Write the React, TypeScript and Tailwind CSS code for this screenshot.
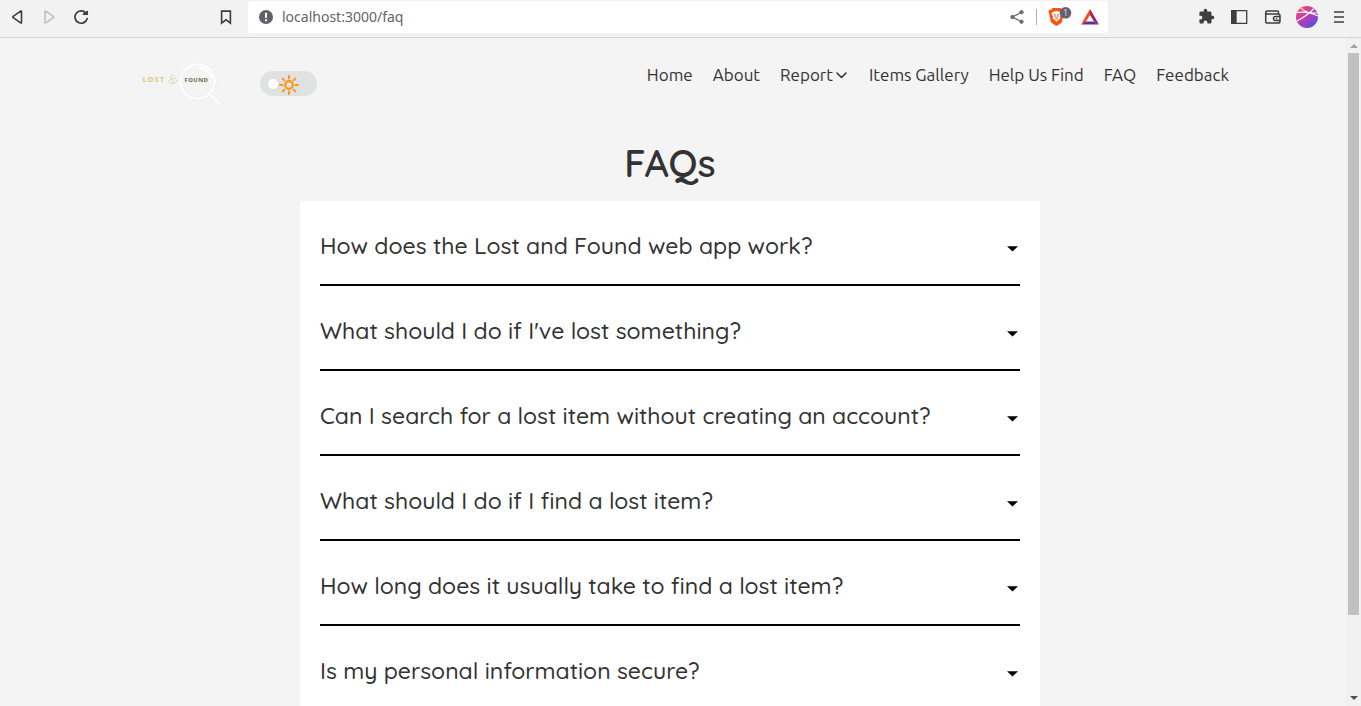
import { useState } from "react";

const questions = [
  "How does the Lost and Found web app work?",
  "What should I do if I've lost something?",
  "Can I search for a lost item without creating an account?",
  "What should I do if I find a lost item?",
  "How long does it usually take to find a lost item?",
  "Is my personal information secure?",
];

function BrowserBar() {
  return (
    <div className="flex h-[38px] shrink-0 items-center border-b border-[#d4d5d6] bg-[#f2f2f2] text-[#3b3e42]">
      <div className="flex w-[248px] items-center pb-1 pl-2">
        <button aria-label="Back" className="flex w-8">
          <svg width="18" height="18" viewBox="0 0 18 18" fill="none" stroke="currentColor" strokeWidth="1.6" strokeLinejoin="round">
            <path d="M13.500 3.600v10.800q0 1-.9.5L5.200 9.700q-.8-.7 0-1.400l7.400-5.200q.9-.5.9.5z" />
          </svg>
        </button>
        <button aria-label="Forward" disabled className="flex w-8 text-[#bfc0c2]">
          <svg width="18" height="18" viewBox="0 0 18 18" fill="none" stroke="currentColor" strokeWidth="1.6" strokeLinejoin="round">
            <path d="M5 3.600v10.800q0 1 .9.5l7.400-5.200q.8-.7 0-1.400L5.900 3.100Q5 2.600 5 3.600z" />
          </svg>
        </button>
        <button aria-label="Reload" className="flex">
          <svg width="18" height="18" viewBox="0 0 18 18" fill="none" stroke="currentColor" strokeWidth="1.7" strokeLinecap="round">
            <path d="M13.900 5A6.200 6.200 0 1 0 15.200 10.500" />
            <path d="M11.500 6.200h3.700V3.600z" fill="currentColor" strokeLinejoin="round" />
          </svg>
        </button>
        <button aria-label="Bookmark this page" className="mr-[13px] ml-auto flex">
          <svg width="18" height="18" viewBox="0 0 18 18" fill="none" stroke="currentColor" strokeWidth="1.600">
            <path d="M4.600 3.100h8.800v12.100L9 11.800l-4.400 3.400z" />
          </svg>
        </button>
      </div>
      <div className="mb-1 flex h-8 w-[860px] items-center rounded bg-white pr-2 pl-[11px]">
        <svg width="14" height="14" viewBox="0 0 14 14" className="shrink-0">
          <circle cx="7" cy="7" r="7" fill="#5f6368" />
          <path d="M6 2.700h2v5H6zM6 9.300h2v2H6z" fill="#fff" />
        </svg>
        <input
          aria-label="Address"
          defaultValue="localhost:3000/faq"
          className="ml-[9px] min-w-0 flex-1 bg-transparent font-['Noto_Sans',sans-serif] text-sm text-[#626569] outline-none"
        />
        <button aria-label="Share" className="mr-3 flex">
          <svg width="14" height="16" viewBox="0 0 14 16" fill="#6b6e72" stroke="#6b6e72">
            <path d="M12 3 2.500 8l9.500 5" fill="none" strokeWidth="1.300" />
            <circle cx="11.500" cy="3.200" r="1.700" />
            <circle cx="2.500" cy="8" r="1.700" />
            <circle cx="11.500" cy="12.700" r="1.700" />
          </svg>
        </button>
        <span className="mr-[10px] h-4 w-px bg-[#adafb2]" />
        <button aria-label="Brave Shields" className="mr-2 flex">
          <svg width="25" height="20" viewBox="0 0 25 20">
            <path d="M5.500 1h8l1.300 1.600 1.400-.1 1.300 2-.7 2-1.700 8q-.3 1-1.200 1.700L9.800 18.800h-.9l-4-2.700q-.9-.6-1.200-1.600L2.100 6.600l-.7-2 1.300-2 1.500.1z" fill="#fb5412" />
            <path d="m5.500 5 4-1 4 1 1 2-1.600 2.500.5 1.800-3.900 3.400-3.900-3.400.5-1.800L4.500 7z" fill="#fff" />
            <path d="m6.600 7 1.700.6-.4 1.900 1.600.9 1.600-.9-.4-1.900 1.700-.6M8 12.200l1.500-.7 1.500.7" fill="none" stroke="#fb5412" strokeWidth=".9" />
            <circle cx="18.500" cy="5.800" r="5.800" fill="#5f6170" />
            <text x="18.500" y="9" textAnchor="middle" fontSize="9" fill="#d8d8dc" fontFamily="Noto Sans">1</text>
          </svg>
        </button>
        <button aria-label="Brave Rewards" className="flex">
          <svg width="20" height="18" viewBox="0 0 20 18">
            <path d="M10 1 1 16.500l5-3L10 7z" fill="#ff4724" />
            <path d="m10 1 9 15.500-5-3L10 7z" fill="#9e1f63" />
            <path d="M1 16.500h18l-5-3H6z" fill="#662d91" />
          </svg>
        </button>
      </div>
      <div className="ml-auto flex items-center pr-[13px] pb-1">
        <button aria-label="Extensions" className="mr-[15px] flex">
          <svg width="17" height="17" viewBox="0 0 24 24" fill="currentColor">
            <path d="M20.500 11H19V7c0-1.100-.9-2-2-2h-4V3.500a2.500 2.500 0 0 0-5 0V5H4a2 2 0 0 0-2 2v3.800h1.500a2.700 2.700 0 0 1 0 5.400H2V20c0 1.100.9 2 2 2h3.800v-1.500a2.700 2.700 0 0 1 5.400 0V22H17a2 2 0 0 0 2-2v-4h1.500a2.500 2.500 0 0 0 0-5z" />
          </svg>
        </button>
        <button aria-label="Side panel" className="mr-4 flex">
          <svg width="18" height="16" viewBox="0 0 18 16" fill="none" stroke="currentColor" strokeWidth="1.300">
            <path d="M1.700 1.700h15v12.600h-15z" />
            <path d="M2 2h4v12H2z" fill="currentColor" />
          </svg>
        </button>
        <button aria-label="Wallet" className="mr-[14px] flex">
          <svg width="18" height="16" viewBox="0 0 18 16" fill="none" stroke="currentColor" strokeWidth="1.500">
            <path d="M14.500 5V3.500Q14.500 2 13 2H3.500Q1.700 2 1.700 3.500v8.700q0 1.800 1.800 1.800h10.700q1.800 0 1.800-1.800V6.500Q16 5 14.200 5H3.500Q1.700 5 1.700 3.500" />
            <path d="M16 7.500h-4.500a2 2 0 0 0 0 4H16M12 9.500h1" />
          </svg>
        </button>
        <button aria-label="Profile" className="mr-3 flex">
          <svg width="22" height="22" viewBox="0 0 22 22">
            <defs>
              <linearGradient id="avatar" x1=".1" y1="0" x2=".9" y2="1">
                <stop offset="0" stopColor="#f8505c" />
                <stop offset=".5" stopColor="#b93ab5" />
                <stop offset="1" stopColor="#3d5be8" />
              </linearGradient>
              <clipPath id="round"><circle cx="11" cy="11" r="11" /></clipPath>
            </defs>
            <g clipPath="url(#round)">
              <path d="M0 0h22v22H0z" fill="url(#avatar)" />
              <path d="M0 15.500Q11 10 18 2.500M1 6.500Q12 5 22 10M5 2q5 5.500 17 5" fill="none" stroke="#fff" strokeWidth="1.100" />
            </g>
          </svg>
        </button>
        <button aria-label="Menu" className="flex">
          <svg width="18" height="16" viewBox="0 0 18 16" stroke="currentColor" strokeWidth="1.700">
            <path d="M4 3h10M4 8h10M4 13h10" />
          </svg>
        </button>
      </div>
    </div>
  );
}

function Logo() {
  return (
    <a href="#home" aria-label="Lost & Found" className="flex">
      <svg width="80" height="44" viewBox="0 0 80 44">
        <text x="1.500" y="20" fontSize="7.500" fontWeight="800" fill="#d9cf86" fontFamily="Noto Sans" letterSpacing="1">LOST</text>
        <path d="M33 15c0-2.500-3.500-2.500-3.500 0 0 2 4 4 2.500 6-2 1.500-4.500 0-3.800-2 .8-2 3-2.500 6.800-2.500M31.500 21c2.500 1 4-1 4-3" fill="none" stroke="#d8d2a4" strokeWidth=".9" />
        <circle cx="56.500" cy="19.500" r="17.500" fill="none" stroke="#fff" strokeWidth="2" />
        <circle cx="56.500" cy="19.500" r="18.500" fill="none" stroke="#dcdcdc" strokeWidth=".6" strokeDasharray="2 2" />
        <path d="M57 5.500q10 1 14 10M70 33l8.500 8.500" fill="none" stroke="#fff" strokeWidth="1.800" />
        <text x="43.500" y="20" fontSize="6" fontWeight="800" fill="#77754f" fontFamily="Noto Sans" letterSpacing=".4">FOUND</text>
      </svg>
    </a>
  );
}

function Header() {
  return (
    <header className="flex items-start pr-[111px] pl-[141px] font-[Ubuntu,'Noto_Sans',sans-serif] text-[#333]">
      <div className="pt-6"><Logo /></div>
      <label className="mt-[33px] ml-[39px] flex h-[25px] w-[57px] cursor-pointer items-center rounded-full bg-[#e0e2e1] pl-2">
        <input type="checkbox" aria-label="Dark mode" className="sr-only" />
        <span className="h-[10px] w-[10px] rounded-full bg-white" />
        <svg width="22" height="22" viewBox="0 0 22 22" fill="none" stroke="#f7981d" strokeWidth="2" strokeLinecap="round">
          <circle cx="11" cy="12" r="3.800" strokeWidth="2.200" />
          <path d="M11 3v2.500M11 18.500V21M2 12h2.500M17.500 12H20M4.600 5.600l1.800 1.800M15.600 16.600l1.800 1.800M4.600 18.400l1.800-1.800M15.600 7.400l1.800-1.800" />
        </svg>
      </label>
      <nav className="mt-[25px] ml-auto flex gap-5 text-[17px] leading-6 whitespace-nowrap">
        <a href="#home">Home</a>
        <a href="#about">About</a>
        <button className="flex items-center gap-[2px] pr-px">
          Report
          <svg width="13" height="12" viewBox="0 0 13 12" fill="none" stroke="currentColor" strokeWidth="1.600" strokeLinecap="round" strokeLinejoin="round">
            <path d="m2 4 4.500 4.500L11 4" />
          </svg>
        </button>
        <a href="#gallery">Items Gallery</a>
        <a href="#help">Help Us Find</a>
        <a href="#faq">FAQ</a>
        <a href="#feedback">Feedback</a>
      </nav>
    </header>
  );
}

function Faq({ question }: { question: string }) {
  const [open, setOpen] = useState(false);
  return (
    <div className="border-b-2 border-black">
      <h2>
        <button
          aria-expanded={open}
          onClick={() => setOpen(!open)}
          className="flex h-[83px] w-full items-center justify-between pt-2 pr-[2px] text-left text-[23px] font-medium"
        >
          {question}
          <svg width="11" height="6" viewBox="0 0 11 6" className="mt-1" fill="#000">
            <path d="M0 .3h11L5.500 5.500z" />
          </svg>
        </button>
      </h2>
    </div>
  );
}

function Scrollbar() {
  return (
    <div aria-hidden="true" className="flex w-[15px] shrink-0 flex-col items-center bg-[#f1f1f1] py-[5px]">
      <svg width="8" height="5" viewBox="0 0 8 5"><path d="M0 5h8L4 1z" fill="#a3a3a3" /></svg>
      <div className="mt-[5px] flex min-h-0 w-[11px] flex-1 flex-col pb-1">
        <span className="h-[88%] bg-[#c1c1c1]" />
      </div>
      <svg width="8" height="5" viewBox="0 0 8 5"><path d="M0 0h8L4 4z" fill="#505050" /></svg>
    </div>
  );
}

export default function App() {
  return (
    <div className="flex h-screen flex-col overflow-hidden bg-[#f4f4f4]">
      <BrowserBar />
      <div className="flex min-h-0 flex-1">
        <div className="min-w-0 flex-1 overflow-hidden pr-[6px]">
          <Header />
          <main className="mx-auto max-w-[740px] font-[Quicksand,Lato,sans-serif] text-[#333]">
            <h1 className="pt-8 pb-[13px] text-center text-[38px] leading-[50px] font-semibold">FAQs</h1>
            <div className="bg-white px-5">
              {questions.map((q) => (
                <Faq key={q} question={q} />
              ))}
            </div>
          </main>
        </div>
        <Scrollbar />
      </div>
    </div>
  );
}
